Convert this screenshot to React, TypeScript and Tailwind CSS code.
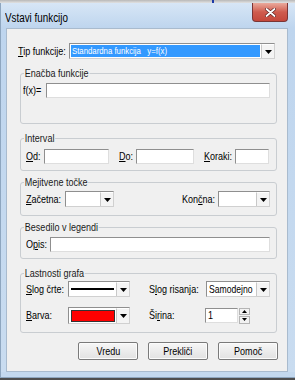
import React from "react";

const FONT = "font-['Liberation_Sans',Arial,sans-serif]";

function L({ children, center }: { children: React.ReactNode; center?: boolean }) {
  return (
    <span
      className={`inline-block whitespace-nowrap scale-x-[0.82] ${center ? "origin-center" : "origin-left"}`}
    >
      {children}
    </span>
  );
}

function Arrow() {
  return (
    <svg width="7" height="4" viewBox="0 0 7 4" className="block">
      <path d="M0 0 H7 L3.5 4 Z" fill="#000" />
    </svg>
  );
}

function DropBtn() {
  return (
    <div className="w-[13px] h-full flex items-center justify-center bg-[#f4f4f4] border-l border-[#c8c8c8] border-t border-t-white">
      <Arrow />
    </div>
  );
}

function TextBox({ w, children }: { w: string; children?: React.ReactNode }) {
  return (
    <div
      className={`${w} h-[15px] bg-white border border-t-[#8f8f8f] border-l-[#8f8f8f] border-b-[#dedede] border-r-[#dedede] flex items-center px-[2px] text-[11px] leading-none`}
    >
      {children}
    </div>
  );
}

function Combo({ w, h = "h-[16px]", children }: { w: string; h?: string; children?: React.ReactNode }) {
  return (
    <div
      className={`${w} ${h} bg-white border border-t-[#8f8f8f] border-l-[#8f8f8f] border-b-[#d0d0d0] border-r-[#d0d0d0] flex`}
    >
      <div className="flex-1 flex items-center min-w-0">{children}</div>
      <DropBtn />
    </div>
  );
}

function Group({ label, h, mt, children }: { label: string; h: string; mt: string; children: React.ReactNode }) {
  return (
    <div className={`relative ml-[13px] w-[257px] ${h} ${mt} border border-[#c9cdd1] rounded-[3px]`}>
      <span className="absolute left-[3px] top-[-7px] h-[12px] leading-[12px] px-[1px] bg-[#f0f0f0] text-[11px] text-[#1a1a1a] whitespace-nowrap origin-left scale-x-[0.82]">
        {label}
      </span>
      {children}
    </div>
  );
}

function Btn({ children }: { children: React.ReactNode }) {
  return (
    <div className="w-[60px] h-[18px] flex items-center justify-center rounded-[2px] border border-[#7a7a7a] bg-gradient-to-b from-[#f7f7f7] to-[#e2e2e2] text-[11px] shadow-[inset_0_0_0_1px_#fcfcfc]">
      <L center>{children}</L>
    </div>
  );
}

export default function App() {
  return (
    <div className={`w-[295px] h-[380px] overflow-hidden bg-[#4e4e4e] flex flex-col ${FONT} text-black`}>
      {/* background strip above window */}
      <div className="h-[3px] bg-gradient-to-b from-[#b8b8b8] to-[#e2e2e2] flex">
        <div className="ml-[212px] w-[2px] bg-[#1c3aa8]" />
      </div>
      {/* window */}
      <div className="h-[375px] flex flex-col bg-[#bdd4ec] border-l border-[#8ea6bf]">
        {/* title bar */}
        <div className="h-[25px] flex items-start bg-gradient-to-b from-[#d7e6f6] to-[#bed5ee]">
          <div className="flex-1 pl-[4px] pt-[8px] text-[12px] leading-[14px] text-black">
            <L>Vstavi funkcijo</L>
          </div>
          <div className="mr-[7px] w-[36px] h-[19px] rounded-b-[4px] border border-t-0 border-[#7a3535] bg-gradient-to-b from-[#e9a99c] via-[#cf5b4e] to-[#c4473b] flex items-center justify-center">
            <svg width="11" height="9" viewBox="0 0 11 9">
              <path d="M1.5 1 L9.5 8 M9.5 1 L1.5 8" stroke="#5a2020" strokeWidth="3.2" strokeLinecap="round" />
              <path d="M1.5 1 L9.5 8 M9.5 1 L1.5 8" stroke="#ffffff" strokeWidth="1.8" strokeLinecap="round" />
            </svg>
          </div>
        </div>
        {/* body */}
        <div className="h-[344px] flex">
          <div className="w-[5px] bg-gradient-to-b from-[#bed5ee] to-[#c9dcf0]" />
          <div className="w-[282px] h-full bg-[#f0f0f0] border border-[#a9bbce] flex flex-col text-[11px] leading-none">
            {/* Tip funkcije */}
            <div className="mt-[14px] flex items-center pl-[11px]">
              <span className="w-[51px]">
                <L>
                  <span className="underline">T</span>ip funkcije:
                </L>
              </span>
              <Combo w="w-[206px]">
                <div className="ml-[1px] mr-[1px] h-[12px] flex-1 bg-[#3399ff] text-white flex items-center px-[1px] text-[9.5px]">
                  <span className="inline-block whitespace-pre origin-left scale-x-[0.82]">Standardna funkcija   y=f(x)</span>
                </div>
              </Combo>
            </div>

            {/* Enačba funkcije */}
            <Group label="Enačba funkcije" h="h-[51px]" mt="mt-[14px]">
              <div className="mt-[9px] flex items-center pl-[2px]">
                <span className="w-[23px]">
                  <L>f(x)=</L>
                </span>
                <TextBox w="w-[224px]" />
              </div>
            </Group>

            {/* Interval */}
            <Group label="Interval" h="h-[33px]" mt="mt-[14px]">
              <div className="mt-[10px] flex items-center pl-[5px]">
                <span className="w-[18px]">
                  <L>
                    <span className="underline">O</span>d:
                  </L>
                </span>
                <TextBox w="w-[65px]" />
                <span className="ml-[10px] w-[17px]">
                  <L>
                    <span className="underline">D</span>o:
                  </L>
                </span>
                <TextBox w="w-[58px]" />
                <span className="ml-[10px] w-[31px]">
                  <L>
                    <span className="underline">K</span>oraki:
                  </L>
                </span>
                <TextBox w="w-[34px]" />
              </div>
            </Group>

            {/* Mejitvene točke */}
            <Group label="Mejitvene točke" h="h-[34px]" mt="mt-[11px]">
              <div className="mt-[8px] flex items-center pl-[5px]">
                <span className="w-[39px]">
                  <L>
                    <span className="underline">Z</span>ačetna:
                  </L>
                </span>
                <Combo w="w-[49px]" />
                <span className="ml-[68px] w-[36px]">
                  <L>
                    Kon<span className="underline">č</span>na:
                  </L>
                </span>
                <Combo w="w-[52px]" />
              </div>
            </Group>

            {/* Besedilo v legendi */}
            <Group label="Besedilo v legendi" h="h-[32px]" mt="mt-[11px]">
              <div className="mt-[9px] flex items-center pl-[5px]">
                <span className="w-[24px]">
                  <L>
                    O<span className="underline">p</span>is:
                  </L>
                </span>
                <TextBox w="w-[220px]" />
              </div>
            </Group>

            {/* Lastnosti grafa */}
            <Group label="Lastnosti grafa" h="h-[60px]" mt="mt-[14px]">
              <div className="mt-[7px] flex items-center pl-[5px]">
                <span className="w-[42px]">
                  <L>
                    <span className="underline">S</span>log črte:
                  </L>
                </span>
                <Combo w="w-[62px]">
                  <div className="ml-[2px] mr-[2px] flex-1 h-[2px] bg-black" />
                </Combo>
                <span className="ml-[19px] w-[57px]">
                  <L>
                    S<span className="underline">l</span>og risanja:
                  </L>
                </span>
                <Combo w="w-[64px]">
                  <span className="pl-[2px] text-[10.5px]">
                    <L>Samodejno</L>
                  </span>
                </Combo>
              </div>
              <div className="mt-[10px] flex items-center pl-[5px]">
                <span className="w-[42px]">
                  <L>
                    <span className="underline">B</span>arva:
                  </L>
                </span>
                <Combo w="w-[62px]" h="h-[17px]">
                  <div className="ml-[2px] mr-[1px] flex-1 h-[12px] bg-[#ff0000] border border-[#333]" />
                </Combo>
                <span className="ml-[19px] w-[56px]">
                  <L>
                    Ši<span className="underline">r</span>ina:
                  </L>
                </span>
                <div className="flex items-center">
                  <TextBox w="w-[33px]">
                    <L>1</L>
                  </TextBox>
                  <div className="ml-[1px] w-[11px] h-[16px] flex flex-col gap-[1px]">
                    <div className="flex-1 border border-[#b5b5b5] bg-[#f2f2f2] flex items-center justify-center">
                      <svg width="5" height="3" viewBox="0 0 5 3"><path d="M0 3 H5 L2.5 0 Z" fill="#000" /></svg>
                    </div>
                    <div className="flex-1 border border-[#b5b5b5] bg-[#f2f2f2] flex items-center justify-center">
                      <svg width="5" height="3" viewBox="0 0 5 3"><path d="M0 0 H5 L2.5 3 Z" fill="#000" /></svg>
                    </div>
                  </div>
                </div>
              </div>
            </Group>

            {/* Buttons */}
            <div className="mt-[9px] flex justify-end gap-[10px] pr-[9px]">
              <Btn>Vredu</Btn>
              <Btn>Prekliči</Btn>
              <Btn>Pomoč</Btn>
            </div>
          </div>
          <div className="flex-1 bg-gradient-to-b from-[#bed5ee] to-[#c9dcf0]" />
        </div>
        {/* bottom frame */}
        <div className="flex-1 bg-[#c3d8ee] border-b border-[#8ea6bf]" />
      </div>
    </div>
  );
}
